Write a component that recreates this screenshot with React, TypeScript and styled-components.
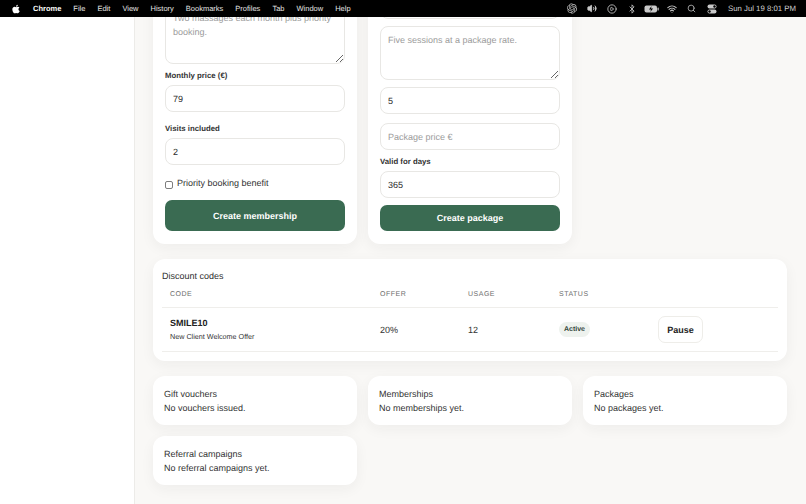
import { FaApple } from "react-icons/fa";
import { SiOpenai } from "react-icons/si";
import { Bluetooth, CirclePlay, Search, Volume2, Wifi } from "lucide-react";
import styled, { createGlobalStyle } from "styled-components";

const GlobalStyle = createGlobalStyle`
    html, body {
        margin: 0;
        height: 100%;
        overflow: hidden;
    }
    body {
        font-family: "Liberation Sans", Arial, sans-serif;
        color: #2b2b2b;
        text-rendering: geometricPrecision;
    }
    input, textarea, button {
        text-rendering: geometricPrecision;
    }
`;

const Screen = styled.div`
    width: 806px;
    height: 504px;
    display: flex;
    flex-direction: column;
    overflow: hidden;
`;

const MenuBar = styled.div`
    height: 17px;
    flex: none;
    background-color: #000000;
    color: #e4e4e4;
    display: flex;
    align-items: center;
    justify-content: space-between;
    padding: 0 10px 0 11px;
    font-size: 7.5px;
    position: relative;
    z-index: 2;
`;

const MenuLeft = styled.div`
    display: flex;
    align-items: center;
    gap: 12px;
`;

const MenuRight = styled.div`
    display: flex;
    align-items: center;
    gap: 10px;
`;

const AppName = styled.span`
    font-weight: bold;
    color: #ffffff;
`;

const StatusIcon = styled.span`
    width: 10px;
    height: 17px;
    display: flex;
    align-items: center;
    justify-content: center;
    color: #c9c9c9;
`;

const Clock = styled.span`
    margin-left: 1px;
    font-size: 7.8px;
    color: #cfcfcf;
`;

const Body = styled.div`
    flex: 1;
    min-height: 0;
    display: flex;
`;

const Sidebar = styled.div`
    width: 134px;
    flex: none;
    background-color: #ffffff;
    border-right: 1px solid #ecebe8;
`;

const Main = styled.div`
    flex: 1;
    min-width: 0;
    background-color: #f9f8f6;
    padding: 0 19px 19px 18px;
    display: flex;
    flex-direction: column;
    justify-content: flex-end;
    overflow: hidden;
    gap: 15px;
`;

const Grid = styled.div`
    display: grid;
    grid-template-columns: repeat(3, 1fr);
    gap: 11px;
`;

const Card = styled.div`
    background-color: #ffffff;
    border-radius: 12px;
    box-shadow: 0 4px 14px rgba(40, 40, 30, 0.05);
`;

const FormCard = styled(Card)`
    padding: 0 12px 13px;
    display: flex;
    flex-direction: column;
    justify-content: flex-end;
`;

const Label = styled.label<{ $top: number }>`
    display: block;
    font-size: 7.8px;
    line-height: 10px;
    font-weight: bold;
    color: #333333;
    margin-top: ${(p) => p.$top}px;
    margin-bottom: 4px;
`;

const TextInput = styled.input<{ $top?: number }>`
    display: block;
    box-sizing: border-box;
    width: 100%;
    height: 27px;
    flex: none;
    margin: ${(p) => p.$top ?? 0}px 0 0;
    padding: 0 7px;
    border: 1px solid #e8e7e4;
    border-radius: 8px;
    outline: none;
    background-color: #ffffff;
    font-family: inherit;
    font-size: 9px;
    color: #2b2b2b;
    &::placeholder {
        color: #9b9b9b;
    }
`;

const TextBox = styled.textarea<{ $height: number; $top?: number }>`
    display: block;
    box-sizing: border-box;
    width: 100%;
    height: ${(p) => p.$height}px;
    flex: none;
    margin: ${(p) => p.$top ?? 0}px 0 0;
    padding: 7px;
    border: 1px solid #e8e7e4;
    border-radius: 8px;
    outline: none;
    background-color: #ffffff;
    font-family: inherit;
    font-size: 9px;
    line-height: 13.5px;
    &::placeholder {
        color: #9b9b9b;
    }
`;

const CheckRow = styled.label`
    display: flex;
    align-items: flex-start;
    gap: 4px;
    margin-top: 12px;
    font-size: 9px;
    line-height: 12px;
    color: #333333;
`;

const CheckBox = styled.input`
    appearance: none;
    box-sizing: border-box;
    width: 8px;
    height: 8px;
    margin: 4px 0 0;
    flex: none;
    border: 1px solid #7d7d7d;
    border-radius: 2px;
    background-color: #ffffff;
`;

const SubmitButton = styled.button<{ $height: number; $top: number }>`
    height: ${(p) => p.$height}px;
    margin-top: ${(p) => p.$top}px;
    flex: none;
    border: none;
    border-radius: 7px;
    background-color: #3a6b52;
    color: #ffffff;
    font-family: inherit;
    font-size: 9px;
    font-weight: bold;
`;

const TableCard = styled(Card)`
    padding: 11px 9px 9px;
`;

const CardTitle = styled.div`
    font-size: 9px;
    line-height: 12px;
    color: #2f2f2f;
`;

const Table = styled.table`
    width: 100%;
    margin-top: 3px;
    border-collapse: collapse;
    table-layout: fixed;
`;

const HeadCell = styled.th<{ $width?: number }>`
    width: ${(p) => (p.$width ? `${p.$width}px` : "auto")};
    padding: 5px 8px 7px;
    border-bottom: 1px solid #efeeeb;
    text-align: left;
    font-size: 7px;
    line-height: 10px;
    font-weight: normal;
    letter-spacing: 0.5px;
    color: #6d6d6d;
`;

const Cell = styled.td`
    height: 43px;
    padding: 0 8px;
    border-bottom: 1px solid #efeeeb;
    font-size: 9px;
    color: #333333;
`;

const CodeName = styled.div`
    font-size: 9px;
    line-height: 12px;
    font-weight: bold;
    color: #222222;
`;

const CodeNote = styled.div`
    margin-top: 3px;
    font-size: 7.2px;
    line-height: 10px;
    color: #333333;
`;

const Pill = styled.span`
    display: inline-block;
    padding: 3px 5px;
    border-radius: 8px;
    background-color: #eef2ee;
    font-size: 7px;
    line-height: 9px;
    font-weight: bold;
    color: #33453a;
`;

const GhostButton = styled.button`
    width: 45px;
    height: 27px;
    border: 1px solid #eeede9;
    border-radius: 7px;
    background-color: #ffffff;
    font-family: inherit;
    font-size: 9px;
    font-weight: bold;
    color: #222222;
`;

const InfoCard = styled(Card)`
    height: 49px;
    box-sizing: border-box;
    padding: 12px 11px;
    font-size: 9px;
    line-height: 13.5px;
    color: #333333;
`;

const menus = ["File", "Edit", "View", "History", "Bookmarks", "Profiles", "Tab", "Window", "Help"];

const infoCards = [
    { title: "Gift vouchers", text: "No vouchers issued." },
    { title: "Memberships", text: "No memberships yet." },
    { title: "Packages", text: "No packages yet." },
    { title: "Referral campaigns", text: "No referral campaigns yet." },
];

const BatteryIcon = () => (
    <svg width="15" height="8" viewBox="0 0 15 8" style={{ flex: "none" }}>
        <rect x="0.5" y="0.5" width="12.5" height="7" rx="2" fill="#c9c9c9" />
        <rect x="13.5" y="2.5" width="1.2" height="3" rx="0.6" fill="#c9c9c9" />
        <path d="M7.5 1 5 4.4h2L6.3 7l2.8-3.5h-2z" fill="#000" />
    </svg>
);

const ControlIcon = () => (
    <svg width="10" height="10" viewBox="0 0 10 10" fill="#c9c9c9">
        <rect x="0.5" y="0.5" width="9" height="4" rx="2" />
        <rect x="0.5" y="5.5" width="9" height="4" rx="2" />
        <circle cx="7.5" cy="2.5" r="1.2" fill="#000" />
        <circle cx="2.5" cy="7.5" r="1.2" fill="#000" />
    </svg>
);

const App = () => {
    return (
        <Screen>
            <GlobalStyle />
            <MenuBar>
                <MenuLeft>
                    <FaApple size={10} color="#ffffff" />
                    <AppName>Chrome</AppName>
                    {menus.map((m) => (
                        <span key={m}>{m}</span>
                    ))}
                </MenuLeft>
                <MenuRight>
                    <StatusIcon><SiOpenai size={11} /></StatusIcon>
                    <StatusIcon><Volume2 size={11} fill="currentColor" /></StatusIcon>
                    <StatusIcon><CirclePlay size={10} /></StatusIcon>
                    <StatusIcon><Bluetooth size={10} /></StatusIcon>
                    <StatusIcon><BatteryIcon /></StatusIcon>
                    <StatusIcon><Wifi size={12} strokeWidth={2.5} /></StatusIcon>
                    <StatusIcon><Search size={9} /></StatusIcon>
                    <StatusIcon><ControlIcon /></StatusIcon>
                    <Clock>Sun Jul 19 8:01 PM</Clock>
                </MenuRight>
            </MenuBar>
            <Body>
                <Sidebar />
                <Main>
                    <Grid>
                        <FormCard>
                            <TextBox $height={60} placeholder="Two massages each month plus priority booking." />
                            <Label $top={7}>Monthly price (€)</Label>
                            <TextInput defaultValue="79" />
                            <Label $top={12}>Visits included</Label>
                            <TextInput defaultValue="2" />
                            <CheckRow>
                                <CheckBox type="checkbox" />
                                Priority booking benefit
                            </CheckRow>
                            <SubmitButton $height={31} $top={11}>Create membership</SubmitButton>
                        </FormCard>
                        <FormCard>
                            <TextInput />
                            <TextBox $height={54} $top={7} placeholder="Five sessions at a package rate." />
                            <TextInput $top={7} defaultValue="5" />
                            <TextInput $top={9} placeholder="Package price €" />
                            <Label $top={7}>Valid for days</Label>
                            <TextInput defaultValue="365" />
                            <SubmitButton $height={26} $top={7}>Create package</SubmitButton>
                        </FormCard>
                    </Grid>
                    <TableCard>
                        <CardTitle>Discount codes</CardTitle>
                        <Table>
                            <thead>
                                <tr>
                                    <HeadCell $width={194}>CODE</HeadCell>
                                    <HeadCell $width={72}>OFFER</HeadCell>
                                    <HeadCell $width={75}>USAGE</HeadCell>
                                    <HeadCell $width={83}>STATUS</HeadCell>
                                    <HeadCell />
                                </tr>
                            </thead>
                            <tbody>
                                <tr>
                                    <Cell>
                                        <CodeName>SMILE10</CodeName>
                                        <CodeNote>New Client Welcome Offer</CodeNote>
                                    </Cell>
                                    <Cell>20%</Cell>
                                    <Cell>12</Cell>
                                    <Cell><Pill>Active</Pill></Cell>
                                    <Cell><GhostButton>Pause</GhostButton></Cell>
                                </tr>
                            </tbody>
                        </Table>
                    </TableCard>
                    <Grid>
                        {infoCards.map((c) => (
                            <InfoCard key={c.title}>
                                <div>{c.title}</div>
                                <div>{c.text}</div>
                            </InfoCard>
                        ))}
                    </Grid>
                </Main>
            </Body>
        </Screen>
    );
};

export default App;
